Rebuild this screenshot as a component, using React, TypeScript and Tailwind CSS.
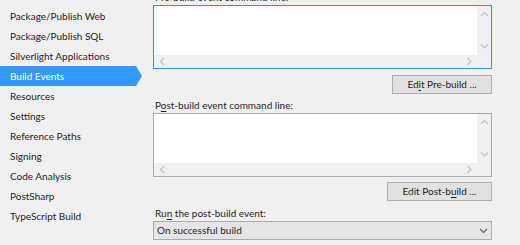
import React from "react";

const navItems = [
  "Package/Publish Web",
  "Package/Publish SQL",
  "Silverlight Applications",
  "Build Events",
  "Resources",
  "Settings",
  "Reference Paths",
  "Signing",
  "Code Analysis",
  "PostSharp",
  "TypeScript Build",
];

function Chevron({ dir }: { dir: "up" | "down" | "left" | "right" }) {
  const paths = {
    up: "M1 5 L4.5 1.5 L8 5",
    down: "M1 1.5 L4.5 5 L8 1.5",
    left: "M5 1 L1.5 4.5 L5 8",
    right: "M1.5 1 L5 4.5 L1.5 8",
  };
  const wide = dir === "up" || dir === "down";
  return (
    <svg width={wide ? 9 : 7} height={wide ? 7 : 9} viewBox={wide ? "0 0 9 7" : "0 0 7 9"} fill="none">
      <path d={paths[dir]} stroke="#c2c2c2" strokeWidth="1.2" />
    </svg>
  );
}

function CommandBox({ focused }: { focused?: boolean }) {
  return (
    <div
      className={`flex h-[64px] w-[339px] flex-col border bg-white ${
        focused ? "border-[#3d8ee0]" : "border-[#a9a9a9]"
      }`}
    >
      <div className="flex flex-1">
        <div className="flex-1" />
        <div className="flex w-[14px] flex-col items-center justify-between bg-[#f0f0f0] py-[5px]">
          <Chevron dir="up" />
          <Chevron dir="down" />
        </div>
      </div>
      <div className="flex h-[13px] items-center justify-between bg-[#f0f0f0] pl-[5px] pr-[18px]">
        <Chevron dir="left" />
        <Chevron dir="right" />
      </div>
    </div>
  );
}

function Mn({ children }: { children: string }) {
  return <span className="underline underline-offset-2">{children}</span>;
}

export default function App() {
  return (
    <div
      className="flex h-[245px] w-[520px] overflow-hidden bg-[#f0f0f0] text-[10px] text-[#1e1e1e]"
      style={{ fontFamily: 'Lato, "Noto Sans", sans-serif' }}
    >
      <nav className="flex w-[142px] shrink-0 flex-col pt-[6px]">
        {navItems.map((item) =>
          item === "Build Events" ? (
            <div key={item} className="flex h-[20px] items-center">
              <div className="flex h-[20px] w-[136px] items-center bg-[#3399ff] pl-[10px] text-white">
                {item}
              </div>
              <div className="h-0 w-0 border-y-[10px] border-l-[6px] border-y-transparent border-l-[#3399ff]" />
            </div>
          ) : (
            <div key={item} className="flex h-[20px] items-center pl-[10px]">
              {item}
            </div>
          )
        )}
      </nav>

      <section className="ml-[11px] mt-[-10px] flex w-[339px] flex-col">
        <div className="h-[15px] pl-[2px] leading-[15px]">
          Pre-build event command line:
        </div>
        <CommandBox focused />
        <div className="mt-[6px] flex justify-end">
          <button className="h-[19px] w-[100px] border border-[#adadad] bg-[#e1e1e1] leading-[17px]">
            Ed<Mn>i</Mn>t Pre-build ...
          </button>
        </div>

        <div className="mt-[4px] h-[15px] pl-[2px] leading-[15px]">
          P<Mn>o</Mn>st-build event command line:
        </div>
        <CommandBox />
        <div className="mt-[5px] flex justify-end">
          <button className="h-[19px] w-[105px] border border-[#adadad] bg-[#e1e1e1] leading-[17px]">
            Edit Post-b<Mn>u</Mn>ild ...
          </button>
        </div>

        <div className="mt-[5px] h-[15px] pl-[2px] leading-[15px]">
          Ru<Mn>n</Mn> the post-build event:
        </div>
        <div className="flex h-[19px] items-center justify-between border border-[#acacac] bg-[#e5e5e5] pl-[3px] pr-[3px]">
          <span>On successful build</span>
          <svg width="9" height="6" viewBox="0 0 9 6" fill="none">
            <path d="M1 1 L4.5 4.5 L8 1" stroke="#606060" strokeWidth="1.1" />
          </svg>
        </div>
      </section>
    </div>
  );
}
